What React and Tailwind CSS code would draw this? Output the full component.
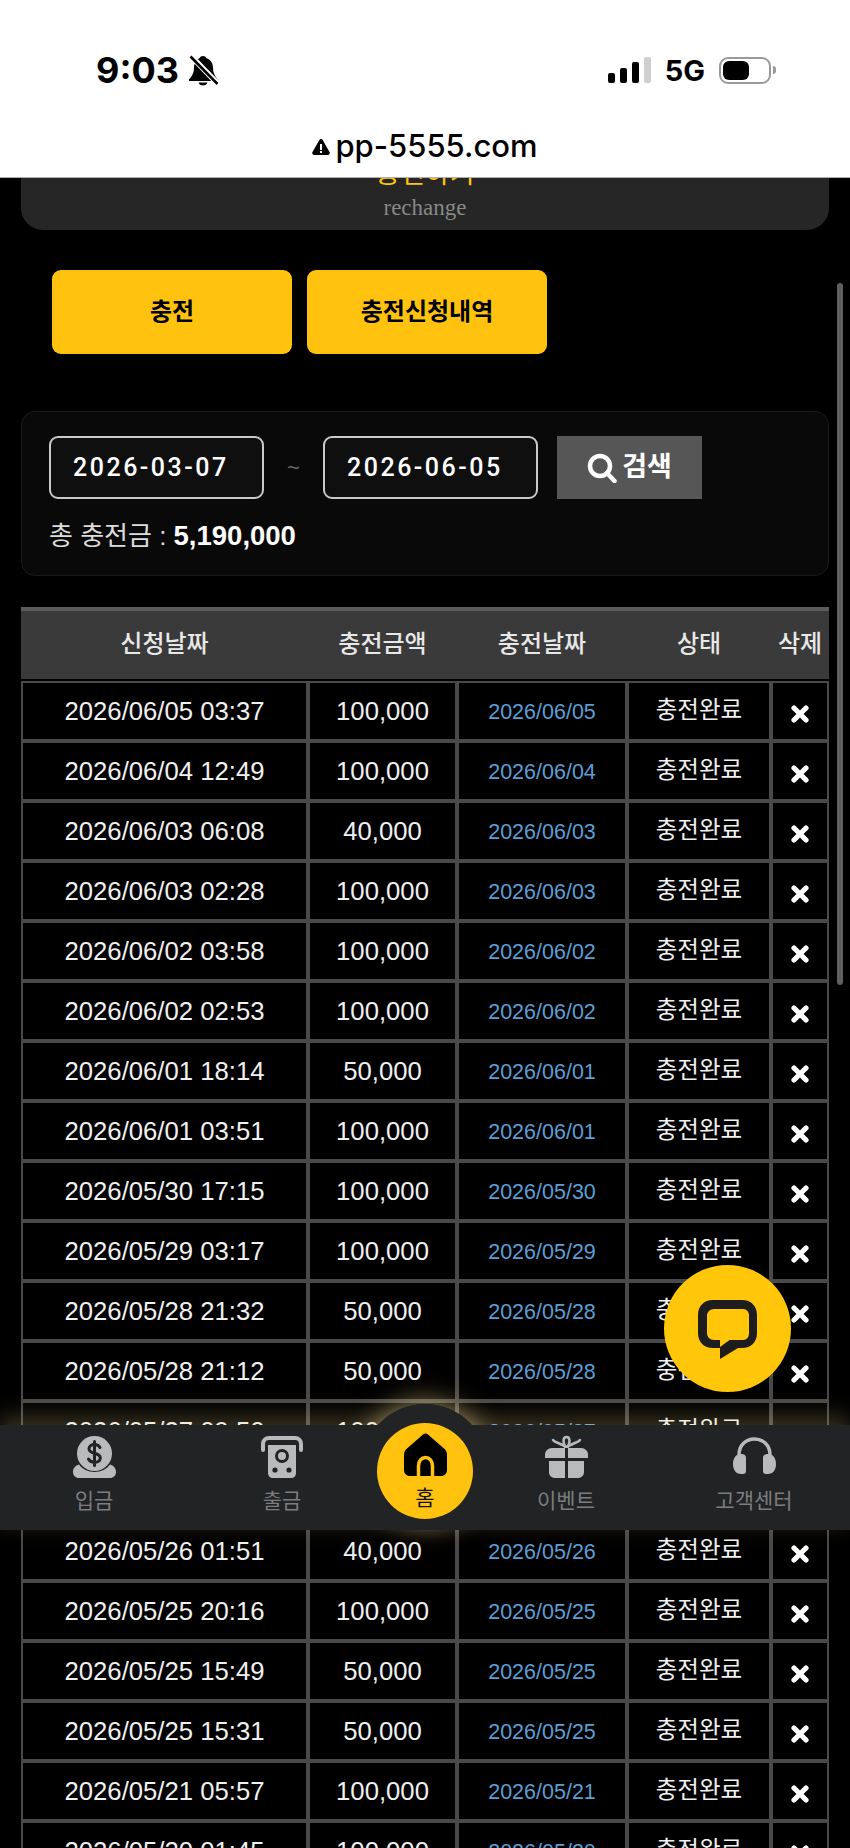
const sans = "[font-family:'Liberation_Sans','Noto_Sans_CJK_KR',sans-serif]"

const columns = 'grid grid-cols-[287px_149px_170px_144px_58px]'

const rows = [
  ['2026/06/05 03:37', '100,000', '2026/06/05'],
  ['2026/06/04 12:49', '100,000', '2026/06/04'],
  ['2026/06/03 06:08', '40,000', '2026/06/03'],
  ['2026/06/03 02:28', '100,000', '2026/06/03'],
  ['2026/06/02 03:58', '100,000', '2026/06/02'],
  ['2026/06/02 02:53', '100,000', '2026/06/02'],
  ['2026/06/01 18:14', '50,000', '2026/06/01'],
  ['2026/06/01 03:51', '100,000', '2026/06/01'],
  ['2026/05/30 17:15', '100,000', '2026/05/30'],
  ['2026/05/29 03:17', '100,000', '2026/05/29'],
  ['2026/05/28 21:32', '50,000', '2026/05/28'],
  ['2026/05/28 21:12', '50,000', '2026/05/28'],
  ['2026/05/27 09:50', '100,000', '2026/05/27'],
  ['2026/05/26 11:20', '100,000', '2026/05/26'],
  ['2026/05/26 01:51', '40,000', '2026/05/26'],
  ['2026/05/25 20:16', '100,000', '2026/05/25'],
  ['2026/05/25 15:49', '50,000', '2026/05/25'],
  ['2026/05/25 15:31', '50,000', '2026/05/25'],
  ['2026/05/21 05:57', '100,000', '2026/05/21'],
  ['2026/05/20 01:45', '100,000', '2026/05/20'],
]

function BellOff() {
  return (
    <svg width="31" height="31" viewBox="0 0 31 31" className="ml-[9px]">
      <path d="M15 1c2 0 3 1 3.400 2.200C23 4.500 25 8.500 25 13c0 5 2 8 4.500 11.500V26H1v-1.500C4 21 6 18 6 13c0-4.500 2-8.500 5.600-9.800C12 2 13 1 15 1z" fill="#000" />
      <path d="M10.500 27.500h9c-.6 2-2.400 3-4.500 3s-3.900-1-4.500-3z" fill="#000" />
      <path d="M3 1l27 28" stroke="#fff" strokeWidth="5.500" />
      <path d="M2.500 1.500l27 27.500" stroke="#000" strokeWidth="2.500" />
    </svg>
  )
}

function StatusBar() {
  return (
    <div className="mt-[45px] flex h-[50px] items-center pl-[96px] pr-[74px]">
      <span className="text-[36px] font-bold leading-none text-black [font-family:Inter,sans-serif]">9:03</span>
      <BellOff />
      <div className="ml-auto flex h-[26px] items-end gap-[5px]">
        <div className="h-[10px] w-[7px] rounded-[2px] bg-black" />
        <div className="h-[15px] w-[7px] rounded-[2px] bg-black" />
        <div className="h-[21px] w-[7px] rounded-[2px] bg-black" />
        <div className="h-[26px] w-[7px] rounded-[2px] bg-[#cfcfcf]" />
      </div>
      <span className="ml-[14px] text-[29px] font-bold leading-none text-black [font-family:Inter,sans-serif]">5G</span>
      <div className="ml-[14px] flex h-[27px] w-[52px] items-center rounded-[9px] border-2 border-[#9a9a9a] pl-[2px]">
        <div className="h-[19px] w-[26px] rounded-[6px] bg-black" />
      </div>
      <div className="ml-[2px] h-[8px] w-[3px] rounded-r-full bg-[#9a9a9a]" />
    </div>
  )
}

function Cross() {
  return (
    <svg width="18" height="18" viewBox="0 0 18 18" className="mt-[6px]">
      <path d="M3 3l12 12M15 3L3 15" stroke="#fff" strokeWidth="5.200" strokeLinecap="round" />
    </svg>
  )
}

function DepositIcon() {
  return (
    <svg width="43" height="42" viewBox="0 0 43 42">
      <circle cx="21.500" cy="17.500" r="17.500" fill="#b9babc" />
      <path d="M27 11.500c-1-2-3-3-5.500-3-3 0-5.500 1.500-5.500 4.300 0 2.800 2.500 3.700 5.500 4.500s5.800 1.700 5.800 4.600c0 2.900-2.800 4.300-5.800 4.300-2.700 0-5-1.100-6-3.200M21.500 5.500v24" stroke="#212325" strokeWidth="3" fill="none" strokeLinecap="round" />
      <path d="M0 36c0-4 2.500-6.500 6-7.500 3 4.500 9 7.500 15.500 7.500S34 33 37 28.500c3.500 1 6 3.500 6 7.500 0 3.500-2.500 6-6 6H6c-3.500 0-6-2.500-6-6z" fill="#b9babc" />
    </svg>
  )
}

function WithdrawIcon() {
  return (
    <svg width="42" height="42" viewBox="0 0 42 42">
      <path d="M2 14V8c0-3.500 2.500-6 6-6h26c3.500 0 6 2.500 6 6v6" fill="none" stroke="#b9babc" strokeWidth="4" strokeLinecap="round" />
      <path d="M7 9h28v28c0 3-2 5-5 5H12c-3 0-5-2-5-5z" fill="#b9babc" />
      <circle cx="21" cy="20" r="5.500" fill="none" stroke="#212325" strokeWidth="3" />
      <circle cx="14" cy="34" r="2.600" fill="#212325" />
      <circle cx="28" cy="34" r="2.600" fill="#212325" />
    </svg>
  )
}

function GiftIcon() {
  return (
    <svg width="43" height="43" viewBox="0 0 43 43">
      <path d="M21.500 13C17 8 10 8 8 5M21.500 13c4.500-5 11.500-5 13.500-8" fill="none" stroke="#b9babc" strokeWidth="2.500" strokeLinecap="round" />
      <path d="M21.500 13c-4-4-4-11 0-11s4 7 0 11z" fill="none" stroke="#b9babc" strokeWidth="2.500" />
      <path d="M7 13h29c4 0 7 3 7 6.500V23H0v-3.500C0 16 3 13 7 13z" fill="#b9babc" />
      <path d="M4 26h16v17H11c-4 0-7-2-7-6zM23 26h16v11c0 4-3 6-7 6h-9z" fill="#b9babc" />
      <path d="M20 13h3v13h-3z" fill="#212325" />
    </svg>
  )
}

function HeadsetIcon() {
  return (
    <svg width="43" height="43" viewBox="0 0 43 43" className="mt-[1px]">
      <path d="M6 24v-5C6 9 13 3 21.500 3S37 9 37 19v5" fill="none" stroke="#b9babc" strokeWidth="3.500" />
      <path d="M8 18c3 0 5 1 5 4v13c0 2-1 3-3 3H8c-5 0-8-4-8-10s3-10 8-10zM35 18c-3 0-5 1-5 4v13c0 2 1 3 3 3h2c5 0 8-4 8-10s-3-10-8-10z" fill="#b9babc" />
    </svg>
  )
}

function HomeIcon() {
  return (
    <svg width="43" height="43" viewBox="0 0 43 43">
      <path d="M19 1.500c1.500-1.200 3.500-1.200 5 0l16 14c2 1.700 3 3.500 3 6V37c0 3.500-2.500 6-6 6H6c-3.500 0-6-2.500-6-6V21.500c0-2.500 1-4.300 3-6z" fill="#000" />
      <path d="M14.500 43V33c0-5 3-8.500 7-8.500s7 3.500 7 8.500v10" fill="none" stroke="#ffc30f" strokeWidth="3.500" />
    </svg>
  )
}

function NavItem({ icon, label }) {
  return (
    <div className="flex flex-col items-center pt-[10px]">
      <div className="flex h-[43px] items-center justify-center">{icon}</div>
      <span className="mt-[8px] text-[21px] leading-[30px] text-[#7c7d7f]">{label}</span>
    </div>
  )
}

function BottomNav() {
  return (
    <div className={`absolute bottom-[318px] left-0 h-[105px] w-full bg-[#212325] shadow-[0_-8px_22px_rgba(255,225,150,0.24)] ${sans}`}>
      <div className="absolute left-[362px] top-[-21px] h-[126px] w-[126px] rounded-full bg-[#212325] shadow-[0_-4px_26px_rgba(255,225,150,0.5)]" />
      <div className="absolute inset-0 bg-[#212325]" />
      <div className="absolute left-[362px] top-[-21px] h-[63px] w-[126px] rounded-t-full bg-[#212325]" />
      <div className="relative grid h-full grid-cols-[188px_188px_98px_184px_192px]">
        <NavItem icon={<DepositIcon />} label="입금" />
        <NavItem icon={<WithdrawIcon />} label="출금" />
        <div className="mt-[-2px] flex h-[96px] w-[96px] flex-col items-center self-start justify-self-center rounded-full bg-[#ffc30f] pt-[10px]">
          <HomeIcon />
          <span className="mt-[7px] text-[21px] leading-[30px] text-[#111]">홈</span>
        </div>
        <NavItem icon={<GiftIcon />} label="이벤트" />
        <NavItem icon={<HeadsetIcon />} label="고객센터" />
      </div>
    </div>
  )
}

export default function App() {
  return (
    <div className={`relative h-[1848px] w-[850px] overflow-hidden bg-black ${sans}`}>
      <header className="flex h-[178px] flex-col border-b border-[#b0b0b0] bg-white">
        <StatusBar />
        <div className="mt-[31px] flex items-center justify-center text-black">
          <svg width="18" height="16" viewBox="0 0 18 16" className="mr-[5px] mt-[2px]">
            <path d="M7.300 1c.8-1.300 2.600-1.300 3.400 0l6.800 12c.8 1.400-.1 3-1.700 3H2.200C.6 16-.3 14.400.5 13z" fill="#000" />
            <path d="M8 5h2v6H8zM8 12h2v2H8z" fill="#fff" />
          </svg>
          <span className="text-[31px] font-medium leading-[40px] [font-family:Inter,sans-serif]">pp-5555.com</span>
        </div>
      </header>

      <main className="px-[21px]">
        <div className="h-[52px] overflow-hidden rounded-b-[22px] bg-[#262626] text-center">
          <p className="mt-[-22px] text-[27px] leading-[36px] text-[#ffc30f]">충전하기</p>
          <p className="mt-[2px] text-[23px] leading-[28px] text-[#888] [font-family:'Liberation_Serif',serif]">rechange</p>
        </div>

        <div className="mt-[40px] flex gap-[15px] pl-[31px]">
          <button className="h-[84px] w-[240px] rounded-[9px] bg-[#ffc30f] text-[24px] font-bold text-black">충전</button>
          <button className="h-[84px] w-[240px] rounded-[9px] bg-[#ffc30f] text-[24px] font-bold text-black">충전신청내역</button>
        </div>

        <section className="mt-[57px] h-[165px] rounded-[14px] border border-[#1a1a1a] bg-[#090909] pl-[27px] pt-[24px]">
          <div className="flex items-center">
            <div className="flex h-[63px] w-[215px] items-center rounded-[9px] border-2 border-[#c9c9c9] bg-[#0f0f0f] pl-[22px] text-[25px] font-medium tracking-[2.500px] text-white [font-family:Roboto,sans-serif]">2026-03-07</div>
            <span className="w-[59px] text-center text-[22px] text-[#666]">~</span>
            <div className="flex h-[63px] w-[215px] items-center rounded-[9px] border-2 border-[#c9c9c9] bg-[#0f0f0f] pl-[22px] text-[25px] font-medium tracking-[2.500px] text-white [font-family:Roboto,sans-serif]">2026-06-05</div>
            <button className="ml-[19px] flex h-[63px] w-[145px] items-center justify-center gap-[5px] bg-[#565656] text-[27px] font-bold text-white">
              <svg width="30" height="30" viewBox="0 0 30 30">
                <circle cx="13" cy="13" r="10" fill="none" stroke="#fff" strokeWidth="4.500" />
                <path d="M20 20l7.500 8" stroke="#fff" strokeWidth="4.500" strokeLinecap="round" />
              </svg>
              검색
            </button>
          </div>
          <p className="mt-[20px] text-[26px] leading-[34px] text-[#ddd]">
            총 충전금 : <b className="text-[27.500px] text-white">5,190,000</b>
          </p>
        </section>

        <section className="mt-[31px] w-[808px]">
          <div className={`${columns} h-[72px] items-center border-t-4 border-[#5c5c5c] bg-[#3a3a3a] pb-[2px] text-center text-[24px] font-medium text-[#e8e8e8]`}>
            <span>신청날짜</span>
            <span>충전금액</span>
            <span>충전날짜</span>
            <span>상태</span>
            <span>삭제</span>
          </div>
          <div className="mt-[2px]">
            {rows.map((row, i) => (
              <div key={i} className={`${columns} h-[60px] text-center text-[25.700px] text-[#f0f0f0]`}>
                <div className="flex items-center justify-center border-2 border-[#494949]">{row[0]}</div>
                <div className="flex items-center justify-center border-2 border-[#494949]">{row[1]}</div>
                <div className="flex items-center justify-center border-2 border-[#494949] pt-[3px] text-[21.500px] text-[#5b9fd6]">{row[2]}</div>
                <div className="flex items-center justify-center border-2 border-[#494949] text-[23.500px]">충전완료</div>
                <div className="flex items-center justify-center border-2 border-[#494949]"><Cross /></div>
              </div>
            ))}
          </div>
        </section>
      </main>

      {/* page scrollbar */}
      <div className="absolute left-[837px] top-[283px] h-[702px] w-[6px] rounded-full bg-[#5f5f5f]" />

      {/* floating chat button */}
      <div className="absolute left-[664px] top-[1265px] flex h-[127px] w-[127px] items-center justify-center rounded-full bg-[#ffc60a]">
        <svg width="60" height="60" viewBox="0 0 60 60" className="mt-[2px]">
          <path fillRule="evenodd" fill="#1d1d1d" d="M15 0h29c9 0 15 6 15 15v18c0 9-6 15-15 15H40L22 59V48h-7C6 48 0 42 0 33V15C0 6 6 0 15 0zM16 9c-4 0-7 3-7 7v17c0 4 3 7 7 7h29c4 0 6-3 6-7V16c0-4-2-7-6-7z" />
          <path d="M22 39v8l11-8z" fill="#ffc60a" />
        </svg>
      </div>

      <BottomNav />
    </div>
  )
}
